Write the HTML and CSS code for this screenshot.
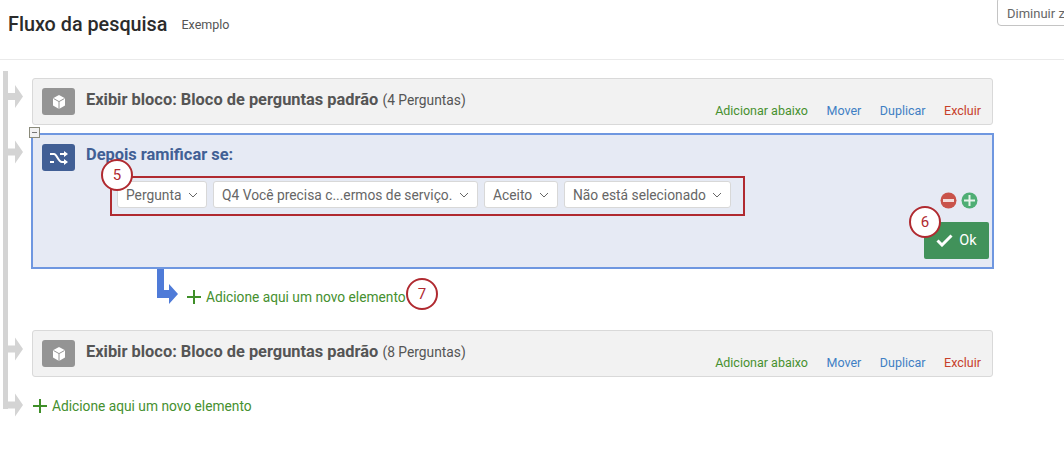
FILE: index.html
```html
<!DOCTYPE html>
<html lang="pt">
<head>
    <meta charset="utf-8">
    <title>Fluxo da pesquisa</title>
    <link rel="stylesheet" href="styles.css">
</head>
<body>

    <div class="header">
        <span class="pageTitle">Fluxo da pesquisa</span>
        <span class="pageSub">Exemplo</span>
        <div class="zoomButton">Diminuir zoom</div>
    </div>

    <div class="flow">

        <!-- gray tree lines + the blue branch arrow -->
        <svg class="flowLines" width="200" height="360" viewBox="0 0 200 360">
            <rect x="3" y="11" width="5" height="338" fill="#d4d4d4"/>
            <path d="M8 33h7v-8l8 11.500-8 11.500v-8H8z" fill="#d4d4d4"/>
            <path d="M8 88.500h7v-8l8 11.500-8 11.500v-8H8z" fill="#d4d4d4"/>
            <path d="M8 285.500h7v-8l8 11.500-8 11.500v-8H8z" fill="#d4d4d4"/>
            <path d="M3 341.500h12v-8l8 11.500-8 11.500v-8H3z" fill="#d4d4d4"/>
            <path d="M157 208h7v22h5v-6l9 10-9 10v-6h-12z" fill="#4f7bd8"/>
        </svg>

        <div class="block">
            <div class="blockIcon">
                <svg width="16" height="16" viewBox="0 0 16 16"><path d="M8 1l6 3.200v7.300L8 15l-6-3.500V4.200z" fill="#fff"/><path d="M2.500 4.500L8 7.600l5.500-3.100M8 7.600V15" stroke="#949494" stroke-width="1" fill="none"/></svg>
            </div>
            <div class="blockTitle">Exibir bloco: Bloco de perguntas padrão <span class="blockCount">(4 Perguntas)</span></div>
            <div class="blockActions">
                <span class="actAdd">Adicionar abaixo</span>
                <span class="actMove">Mover</span>
                <span class="actMove">Duplicar</span>
                <span class="actDel">Excluir</span>
            </div>
        </div>

        <div class="branch">
            <div class="collapseBox"></div>
            <div class="branchHead">
                <div class="blockIcon branchIcon">
                    <svg width="20" height="14" viewBox="0 0 20 14"><path d="M1 3h4c3 0 4 8 8 8h2M1 11h4M11 3h4" stroke="#fff" stroke-width="2" fill="none"/><path d="M15 0l4 3-4 3zM15 8l4 3-4 3z" fill="#fff"/></svg>
                </div>
                <div class="branchTitle">Depois ramificar se:</div>
            </div>
            <div class="condRow">
                <div class="selectBox sel1">Pergunta<svg class="chev" width="10" height="6" viewBox="0 0 10 6"><path d="M1 1l4 4 4-4" stroke="#666" fill="none"/></svg></div>
                <div class="selectBox sel2">Q4 Você precisa c...ermos de serviço.<svg class="chev" width="10" height="6" viewBox="0 0 10 6"><path d="M1 1l4 4 4-4" stroke="#666" fill="none"/></svg></div>
                <div class="selectBox sel3">Aceito<svg class="chev" width="10" height="6" viewBox="0 0 10 6"><path d="M1 1l4 4 4-4" stroke="#666" fill="none"/></svg></div>
                <div class="selectBox sel4">Não está selecionado<svg class="chev" width="10" height="6" viewBox="0 0 10 6"><path d="M1 1l4 4 4-4" stroke="#666" fill="none"/></svg></div>
            </div>
            <div class="branchFoot">
                <div class="roundBtns">
                    <svg width="17" height="17" viewBox="0 0 17 17"><circle cx="8.500" cy="8.500" r="8" fill="#c9534a"/><rect x="3" y="7" width="11" height="3" fill="#f3dcda"/></svg>
                    <svg width="17" height="17" viewBox="0 0 17 17"><circle cx="8.500" cy="8.500" r="8" fill="#4fae74"/><path d="M3 7.500h4.500V3h2v4.500H14v2H9.500V14h-2V9.500H3z" fill="#e6f4ea"/></svg>
                </div>
                <div class="okButton">
                    <svg width="17" height="13" viewBox="0 0 17 13"><path d="M1.500 6.500l4.500 4.500L15.500 1.500" stroke="#fff" stroke-width="3" fill="none"/></svg>
                    Ok
                </div>
            </div>
            <div class="callout call5">5</div>
            <div class="callout call6">6</div>
        </div>

        <div class="addRow addInner">
            <svg width="14" height="14" viewBox="0 0 14 14"><path d="M6 0h2v6h6v2H8v6H6V8H0V6h6z" fill="#3f8f29"/></svg>
            <span>Adicione aqui um novo elemento</span>
            <div class="callout call7">7</div>
        </div>

        <div class="block">
            <div class="blockIcon">
                <svg width="16" height="16" viewBox="0 0 16 16"><path d="M8 1l6 3.200v7.300L8 15l-6-3.500V4.200z" fill="#fff"/><path d="M2.500 4.500L8 7.600l5.500-3.100M8 7.600V15" stroke="#949494" stroke-width="1" fill="none"/></svg>
            </div>
            <div class="blockTitle">Exibir bloco: Bloco de perguntas padrão <span class="blockCount">(8 Perguntas)</span></div>
            <div class="blockActions">
                <span class="actAdd">Adicionar abaixo</span>
                <span class="actMove">Mover</span>
                <span class="actMove">Duplicar</span>
                <span class="actDel">Excluir</span>
            </div>
        </div>

        <div class="addRow addOuter">
            <svg width="14" height="14" viewBox="0 0 14 14"><path d="M6 0h2v6h6v2H8v6H6V8H0V6h6z" fill="#3f8f29"/></svg>
            <span>Adicione aqui um novo elemento</span>
        </div>

    </div>

</body>
</html>
```

FILE: styles.css
```css
html, body
{
    margin:           0;
    height:           456px;
    overflow:         hidden;
    background-color: #fff;
    font-family:      Roboto, "Liberation Sans", sans-serif;
    color:            #555;
}

.header
{
    position:       relative;
    display:        flex;
    align-items:    center;
    height:         48px;
    padding:        0 0 11px 8px;
    border-bottom:  1px solid #eaeaea;
}

.pageTitle
{
    font-size:   19.800px;
    font-weight: 500;
    color:       #2b2b2b;
}

.pageSub
{
    margin-left: 14px;
    font-size:   12.500px;
    color:       #555;
}

.zoomButton
{
    position:      absolute;
    left:          997px;
    top:           -3px;
    width:         90px;
    height:        29px;
    box-sizing:    border-box;
    padding:       8px 0 0 9px;
    border:        1px solid #c4c4c4;
    border-radius: 4px;
    font-size:     13px;
    font-weight:   400;
    color:         #666;
    white-space:   nowrap;
}

.flow
{
    position:    relative;
    padding:     18px 0 0 32px;
    width:       961px;
}

.flowLines
{
    position: absolute;
    left:     0;
    top:      0;
}

.block
{
    position:         relative;
    display:          flex;
    height:           47px;
    box-sizing:       border-box;
    padding:          9px 10px 0 9px;
    background-color: #f2f2f2;
    border:           1px solid #d9d9d9;
    border-radius:    3px;
}

.blockIcon
{
    display:          flex;
    align-items:      center;
    justify-content:  center;
    flex:             none;
    width:            33px;
    height:           27px;
    background-color: #949494;
    border-radius:    3px;
}

.blockTitle
{
    margin:      2px 0 0 11px;
    font-size:   16.400px;
    font-weight: 700;
    color:       #555;
}

.blockCount
{
    font-size:   13.800px;
    font-weight: 400;
}

.blockActions
{
    position:  absolute;
    right:     11px;
    bottom:    6px;
    display:   flex;
    gap:       18.500px;
    font-size: 12.500px;
}

.actAdd  { color: #46902f; }
.actMove { color: #3f7fc4; }
.actDel  { color: #c8402a; }

.branch
{
    position:         relative;
    height:           136px;
    box-sizing:       border-box;
    margin:           8px -1px 0 -1px;
    padding:          9px 4px 0 9px;
    background-color: #e6eaf4;
    border:           2px solid #6f97e0;
}

.collapseBox
{
    position:         absolute;
    left:             -4px;
    top:              -8px;
    width:            9px;
    height:           9px;
    background-color: #f2f2f2;
    background-image: linear-gradient(#777, #777);
    background-size:  5px 1px;
    background-position: center;
    background-repeat:   no-repeat;
    border:           1px solid #8a8a7a;
}

.branchHead
{
    display: flex;
}

.branchIcon
{
    background-color: #415f95;
}

.branchTitle
{
    margin:      1px 0 0 11px;
    font-size:   16.400px;
    font-weight: 700;
    color:       #415f95;
}

.condRow
{
    display:    flex;
    gap:        6px;
    width:      635px;
    height:     40px;
    box-sizing: border-box;
    margin:     5px 0 0 68px;
    padding:    3px 0 0 5px;
    border:     2px solid #b02a30;
}

.selectBox
{
    display:          flex;
    align-items:      center;
    justify-content:  space-between;
    height:           27px;
    box-sizing:       border-box;
    padding:          0 8px 0 8px;
    background-color: #fff;
    border:           1px solid #d8d8d8;
    border-radius:    3px;
    font-size:        13.800px;
    color:            #666;
    white-space:      nowrap;
}

.sel1 { width: 90px; }
.sel2 { width: 265px; }
.sel3 { width: 74px; }
.sel4 { width: 167px; }

.chev { flex: none; }

.branchFoot
{
    position:       absolute;
    right:          3px;
    top:            57px;
    display:        flex;
    flex-direction: column;
    align-items:    flex-end;
}

.roundBtns
{
    display:      flex;
    gap:          4px;
    margin-right: 11px;
}

.okButton
{
    display:          flex;
    align-items:      center;
    justify-content:  center;
    gap:              6px;
    width:            65px;
    height:           37px;
    margin-top:       13px;
    background-color: #41925a;
    border-radius:    2px;
    font-size:        14.500px;
    font-weight:      400;
    color:            #fff;
}

.callout
{
    position:         absolute;
    z-index:          2;
    width:            32px;
    height:           32px;
    box-sizing:       border-box;
    display:          flex;
    align-items:      center;
    justify-content:  center;
    background-color: #fff;
    border:           2.500px solid #b02a30;
    border-radius:    50%;
    font-size:        15px;
    font-weight:      400;
    color:            #b02a30;
}

.call5 { left: 68px;  top: 24px; }
.call6 { left: 876px; top: 71px; }
.call7 { left: 219px; top: -9px; }

.addRow
{
    position:    relative;
    display:     flex;
    align-items: center;
    gap:         5px;
    font-size:   13.750px;
    color:       #46902f;
}

.addInner
{
    width:   fit-content;
    margin:  18px 0 23px 155px;
    height:  20px;
}

.addOuter
{
    margin: 21px 0 0 1px;
}
```
